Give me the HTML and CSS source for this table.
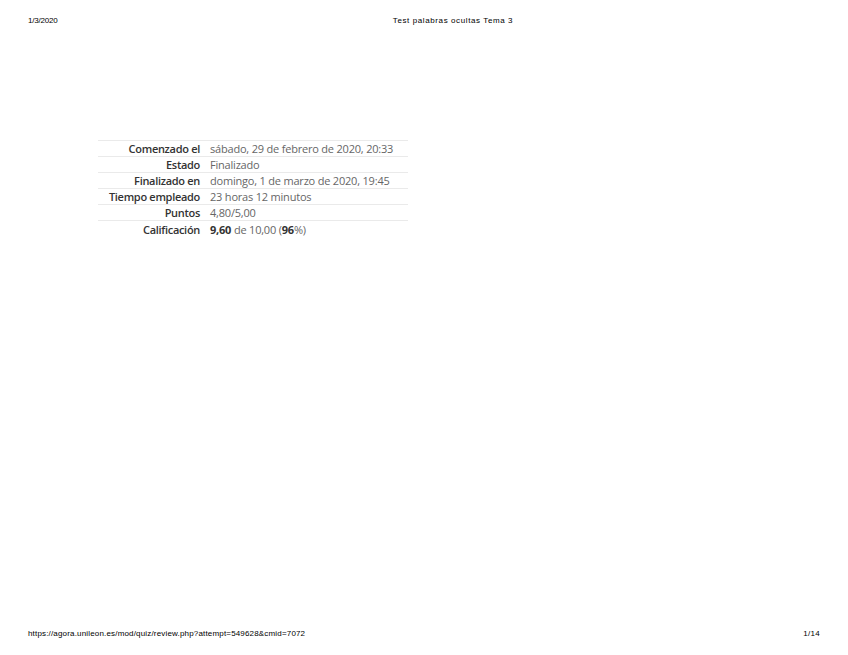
FILE: index.html
```html
<!DOCTYPE html>
<html lang="es">
<head>
<meta charset="utf-8">
<title>Test palabras ocultas Tema 3</title>
<link rel="stylesheet" href="styles.css">
</head>
<body>
<div class="page">
  <header class="print-head">
    <span class="date">1/3/2020</span>
    <span class="doc-title">Test palabras ocultas Tema 3</span>
    <span class="spacer"></span>
  </header>
  <main class="content">
    <table class="summary">
      <tbody>
        <tr><th>Comenzado el</th><td>sábado, 29 de febrero de 2020, 20:33</td></tr>
        <tr><th>Estado</th><td>Finalizado</td></tr>
        <tr><th>Finalizado en</th><td>domingo, 1 de marzo de 2020, 19:45</td></tr>
        <tr><th>Tiempo empleado</th><td>23 horas 12 minutos</td></tr>
        <tr><th>Puntos</th><td>4,80/5,00</td></tr>
        <tr class="last"><th>Calificación</th><td><b>9,60</b> de 10,00 (<b>96</b>%)</td></tr>
      </tbody>
    </table>
  </main>
  <footer class="print-foot">
    <span class="url">https://agora.unileon.es/mod/quiz/review.php?attempt=549628&amp;cmid=7072</span>
    <span class="pages">1/14</span>
  </footer>
</div>
</body>
</html>
```
FILE: styles.css
```css
html, body {
  margin: 0;
  padding: 0;
  background: #fff;
}
.page {
  width: 848px;
  height: 655px;
  display: flex;
  flex-direction: column;
  box-sizing: border-box;
  padding: 15px 28px 0 28px;
  font-family: "Liberation Sans", Arial, sans-serif;
  color: #000;
}
.print-head {
  display: flex;
  align-items: center;
  font-size: 8px;
  line-height: 12px;
  letter-spacing: -0.2px;
}
.print-head .date { width: 120px; }
.print-head .doc-title {
  flex: 1;
  text-align: center;
  padding-left: 58px;
  letter-spacing: 0.6px;
}
.print-head .spacer { width: 120px; }
.content {
  flex: 1;
  padding: 113px 0 0 70px;
}
.summary {
  border-collapse: collapse;
  width: 310px;
  font-family: "Open Sans", "DejaVu Sans", sans-serif;
  font-size: 11px;
}
.summary tr { border-top: 1px solid #eaeaea; }
.summary tr.last { height: 17px; }
.summary th {
  text-align: right;
  font-weight: 600;
  color: #333;
  padding: 0 6px 0 0;
  height: 15px;
  line-height: 15px;
  white-space: nowrap;
  letter-spacing: -0.3px;
  width: 102px;
}
.summary td {
  color: #666;
  padding: 0 0 0 4px;
  height: 15px;
  line-height: 15px;
  white-space: nowrap;
  letter-spacing: -0.2px;
}
.summary td b { font-weight: 700; color: #333; }
.print-foot {
  display: flex;
  justify-content: space-between;
  align-items: center;
  font-size: 8px;
  line-height: 12px;
  padding: 0 0 15px 0;
}
.print-foot .url { letter-spacing: 0.17px; }
.print-foot .pages { letter-spacing: 0.3px; }
```
